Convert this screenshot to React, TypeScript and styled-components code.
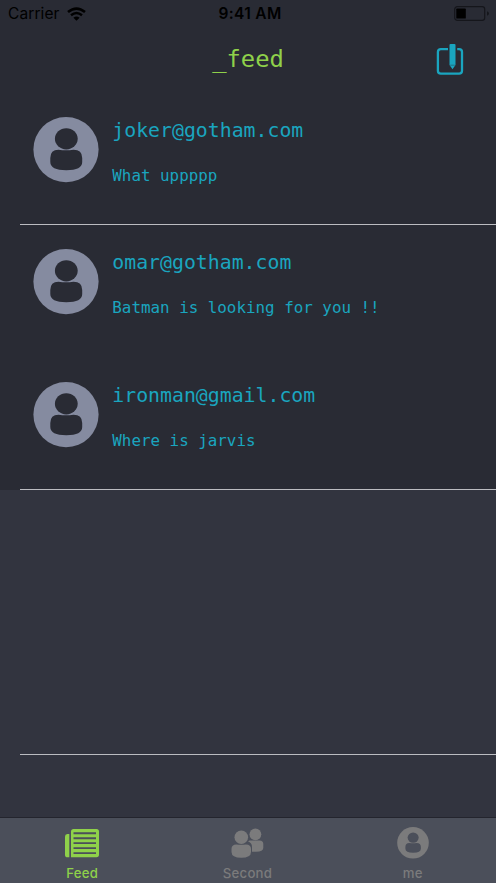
import React from "react";
import styled, { createGlobalStyle } from "styled-components";

const Global = createGlobalStyle`
  *, *::before, *::after { box-sizing: border-box; }
  body { margin: 0; background: #32343f; }
`;

const mono = `"DejaVu Sans Mono", monospace`;
const sans = `Inter, "Liberation Sans", sans-serif`;

const Screen = styled.div`
  width: 496px;
  height: 883px;
  display: flex;
  flex-direction: column;
  overflow: hidden;
  background: #32343f;
`;

const StatusBar = styled.div`
  height: 27px;
  flex: none;
  display: grid;
  grid-template-columns: 1fr auto 1fr;
  align-items: center;
  padding: 0 6px 0 8px;
  background: #292b34;
  color: #000;
  font: 400 15.5px/27px ${sans};
`;

const Carrier = styled.div`
  display: flex;
  align-items: center;
  gap: 7px;
  letter-spacing: 0.1px;
`;

const Clock = styled.div`
  font-weight: 600;
  letter-spacing: 0.35px;
  padding-left: 2px;
`;

const BatterySlot = styled.div`
  display: flex;
  justify-content: flex-end;
`;

const Header = styled.header`
  height: 65.6px;
  flex: none;
  display: grid;
  grid-template-columns: 1fr auto 1fr;
  align-items: start;
  padding: 16px 32px 0 32px;
  background: #292b34;
`;

const Title = styled.h1`
  grid-column: 2;
  margin: 0;
  color: #8fd14a;
  font: 400 23.8px/32px ${mono};
`;

const ComposeButton = styled.button`
  justify-self: end;
  padding: 0;
  border: 0;
  background: none;
  height: 34px;
`;

const Feed = styled.main`
  flex: 1;
  min-height: 0;
`;

const Row = styled.article<{ $line?: boolean; $filled?: boolean }>`
  height: 132.4px;
  display: flex;
  flex-direction: column;
  background: ${(p) => (p.$filled ? "#292b34" : "transparent")};
  &::after {
    content: "";
    height: 1px;
    margin: auto 0 0 20px;
    background: ${(p) => (p.$line ? "#bbbcc1" : "transparent")};
  }
`;

const RowBody = styled.div`
  display: flex;
  gap: 13px;
  padding: 24.2px 0 0 33px;
`;

const Texts = styled.div`
  padding-top: 2px;
  color: #1aa5bf;
`;

const Email = styled.div`
  padding-left: 0.3px;
  font: 400 19.84px/24px ${mono};
`;

const Message = styled.p`
  margin: 23px 0 0;
  padding-left: 0.3px;
  font: 400 15.87px/20px ${mono};
`;

const TabBar = styled.nav`
  height: 66px;
  flex: none;
  display: grid;
  grid-template-columns: repeat(3, 1fr);
  border-top: 1px solid #24252e;
  background: #4b4f5a;
`;

const Tab = styled.div<{ $active?: boolean }>`
  display: flex;
  flex-direction: column;
  align-items: center;
  color: ${(p) => (p.$active ? "#8fd14a" : "#7b7b7c")};
`;

const TabIcon = styled.div<{ $top: number }>`
  height: 46px;
  padding-top: ${(p) => p.$top}px;
`;

const TabLabel = styled.span`
  padding-right: 1px;
  font: 500 13.2px/19px ${sans};
  letter-spacing: 0.25px;
`;

const WifiIcon = () => (
  <svg width="19" height="14" viewBox="0 0 19 14" fill="none" stroke="#000" display="block">
    <path d="M1 5.1Q9.5 -2 18 5.1" strokeWidth="2.6" />
    <path d="M4 8.3Q9.5 3.8 15 8.3" strokeWidth="2.4" />
    <path d="M6.4 10.8Q9.5 8.2 12.6 10.8L9.5 13.8Z" fill="#000" stroke="none" />
  </svg>
);

const BatteryIcon = () => (
  <svg width="36" height="15" viewBox="0 0 36 15" display="block">
    <rect x="0.7" y="0.7" width="30" height="13.6" rx="2.6" fill="none" stroke="#15161b" strokeWidth="1.2" />
    <rect x="2.3" y="2.6" width="9.5" height="10" rx="0.6" fill="#000" />
    <path d="M33 5.2Q35 6 35 7.5T33 9.8Z" fill="#15161b" />
  </svg>
);

const ComposeIcon = () => (
  <svg width="28" height="34" viewBox="0 0 28 34" display="block">
    <path
      d="M12 6.2H4.8Q1.9 6.2 1.9 9V27.8Q1.9 30.6 4.8 30.6H23.1Q26 30.6 26 27.8V9Q26 6.2 23.1 6.2H21.2"
      fill="none"
      stroke="#1aa5bf"
      strokeWidth="2.3"
    />
    <path d="M13.5 2Q13.5 1 14.5 1H18.5Q19.5 1 19.5 2V22L16.5 26.3L13.5 22Z" fill="#1aa5bf" />
    <path d="M14.2 22.2H18.8" stroke="#292b34" strokeOpacity="0.55" strokeWidth="0.8" />
  </svg>
);

const PersonIcon = ({ size, fill, inner }: { size: number; fill: string; inner: string }) => (
  <svg width={size} height={size} viewBox="0 0 66 66" display="block">
    <circle cx="33" cy="32.6" r="32.6" fill={fill} />
    <ellipse cx="33.3" cy="21.8" rx="11.4" ry="10.6" fill={inner} />
    <path
      d="M25.5 32.8Q33 33.8 40.5 32.8Q49.2 32.8 49.2 41V45Q49.2 53.2 33.3 53.2T17.3 45V41Q17.3 32.8 25.5 32.8Z"
      fill={inner}
    />
  </svg>
);

const NewsIcon = () => (
  <svg width="36" height="29" viewBox="0 0 36 29" display="block">
    <path d="M4.3 5V28.3H2.6Q0 28.3 0 26V7.5Q0 5 2.4 5Z" fill="#8fd14a" />
    <path d="M6 2.5Q6 0 8.5 0H31.5Q34 0 34 2.5V25.5Q34 28.3 31.5 28.3H6Z" fill="#8fd14a" />
    <path d="M8.5 4.2H31M8.5 9.2H31M8.5 14.1H31M8.5 19.1H31M8.5 24.1H31" stroke="#4b4f5a" strokeWidth="1.9" />
  </svg>
);

const PeopleIcon = () => (
  <svg width="34" height="31" viewBox="0 0 34 31" fill="#7b7b7c" display="block">
    <circle cx="24.4" cy="6.3" r="5.9" />
    <path d="M18.5 12.5H28.5Q32.3 12.5 32.3 16V20Q32.3 23.7 25 23.7H21V19Q21 14.5 17 13.5Z" />
    <ellipse cx="10.3" cy="9.2" rx="6.8" ry="6.8" />
    <path d="M5.4 16.5Q10 17.2 15 16.5Q20 16.5 20 21V24Q20 29.8 10.3 29.8T.5 24V21Q.5 16.5 5.4 16.5Z" />
  </svg>
);

const posts = [
  { email: "joker@gotham.com", message: "What uppppp", line: true },
  { email: "omar@gotham.com", message: "Batman is looking for you !!", line: false },
  { email: "ironman@gmail.com", message: "Where is jarvis", line: true },
];

export default function App() {
  return (
    <Screen>
      <Global />
      <StatusBar>
        <Carrier>
          Carrier
          <WifiIcon />
        </Carrier>
        <Clock>9:41 AM</Clock>
        <BatterySlot>
          <BatteryIcon />
        </BatterySlot>
      </StatusBar>
      <Header>
        <Title>_feed</Title>
        <ComposeButton aria-label="Compose">
          <ComposeIcon />
        </ComposeButton>
      </Header>
      <Feed>
        {posts.map((post) => (
          <Row key={post.email} $filled $line={post.line}>
            <RowBody>
              <PersonIcon size={66} fill="#858ba0" inner="#292b34" />
              <Texts>
                <Email>{post.email}</Email>
                <Message>{post.message}</Message>
              </Texts>
            </RowBody>
          </Row>
        ))}
        <Row />
        <Row $line />
      </Feed>
      <TabBar>
        <Tab $active>
          <TabIcon $top={11}>
            <NewsIcon />
          </TabIcon>
          <TabLabel>Feed</TabLabel>
        </Tab>
        <Tab>
          <TabIcon $top={10}>
            <PeopleIcon />
          </TabIcon>
          <TabLabel>Second</TabLabel>
        </Tab>
        <Tab>
          <TabIcon $top={9}>
            <PersonIcon size={32} fill="#7b7b7c" inner="#4b4f5a" />
          </TabIcon>
          <TabLabel>me</TabLabel>
        </Tab>
      </TabBar>
    </Screen>
  );
}
